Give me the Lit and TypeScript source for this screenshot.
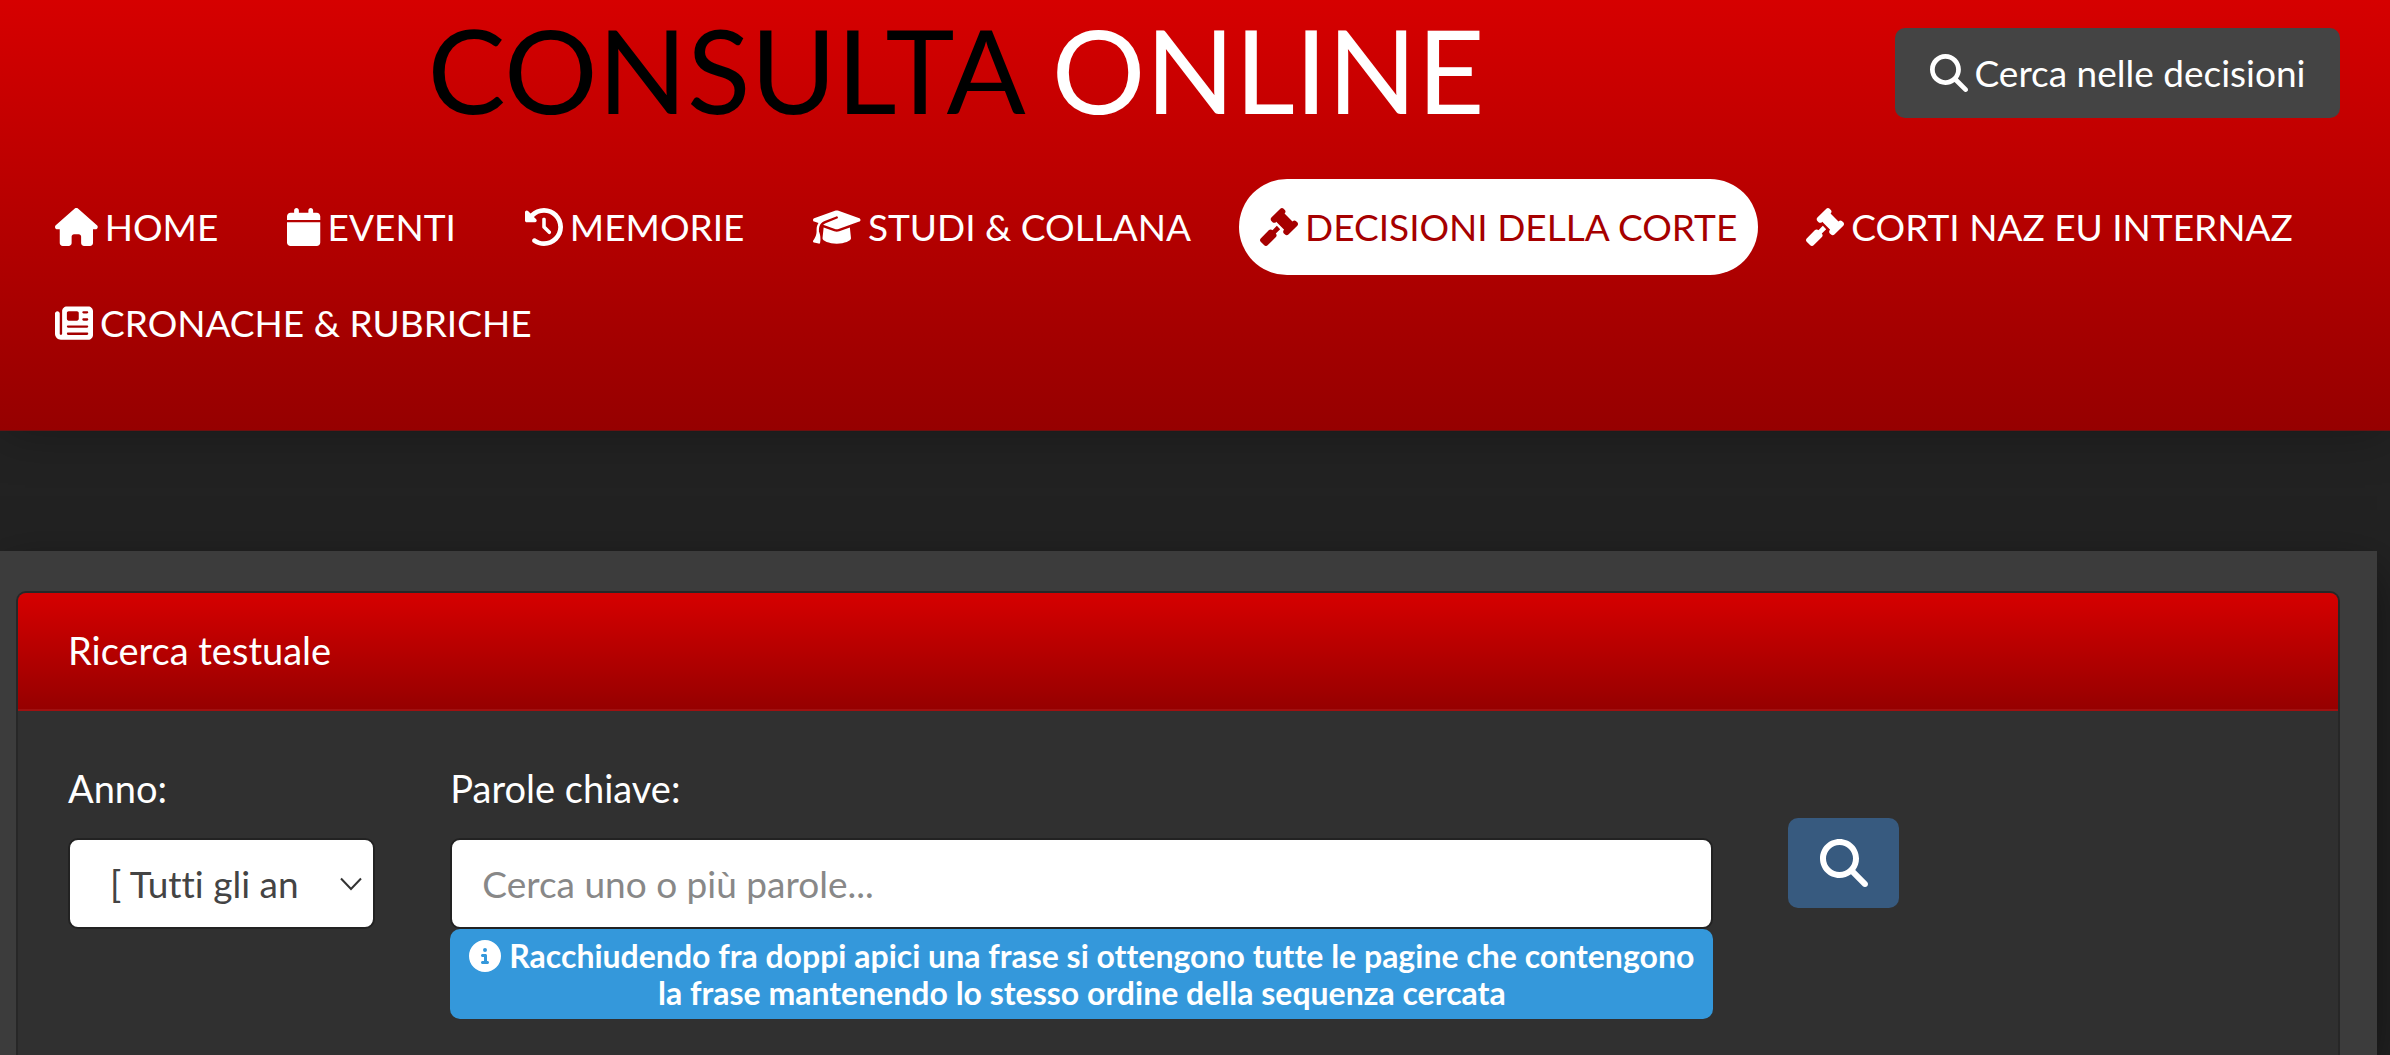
import { LitElement, html, css, svg } from "lit";
import { customElement, property } from "lit/decorators.js";
import { classMap } from "lit/directives/class-map.js";

/** Solid glyphs on a 512-unit tall grid: [grid width, outline]. */
const ICONS: Record<string, [number, string]> = {
  search: [512, "M416 208c0 45.9-14.9 88.3-40 122.7L502.6 457.4c12.5 12.5 12.5 32.8 0 45.3s-32.8 12.5-45.3 0L330.7 376c-34.4 25.2-76.8 40-122.7 40C93.1 416 0 322.9 0 208S93.1 0 208 0S416 93.1 416 208zM208 352a144 144 0 1 0 0-288 144 144 0 1 0 0 288z"],
  house: [576, "M575.8 255.5c0 18-15 32.1-32 32.1h-32l.7 160.2c0 2.7-.2 5.4-.5 8.1V472c0 22.1-17.9 40-40 40H456c-1.1 0-2.2 0-3.3-.1c-1.4 .1-2.8 .1-4.2 .1H416 392c-22.1 0-40-17.9-40-40V448 384c0-17.7-14.3-32-32-32H256c-17.7 0-32 14.3-32 32v64 24c0 22.1-17.9 40-40 40H160 128.1c-1.5 0-3-.1-4.5-.2c-1.2 .1-2.4 .2-3.6 .2H104c-22.1 0-40-17.9-40-40V360c0-.9 0-1.9 .1-2.8V287.6H32c-18 0-32-14-32-32.1c0-9 3-17 10-24L266.4 8c7-7 15-8 22-8s15 2 21 7L564.8 231.5c8 7 12 15 11 24z"],
  calendar: [448, "M96 32V64H48C21.5 64 0 85.5 0 112v48H448V112c0-26.5-21.5-48-48-48H352V32c0-17.7-14.3-32-32-32s-32 14.3-32 32V64H160V32c0-17.7-14.3-32-32-32S96 14.3 96 32zM448 192H0V464c0 26.5 21.5 48 48 48H400c26.5 0 48-21.5 48-48V192z"],
  history: [512, "M75 75L41 41C25.9 25.9 0 36.6 0 57.9V168c0 13.3 10.7 24 24 24H134.1c21.4 0 32.1-25.9 17-41l-30.8-30.8C155 85.5 203 64 256 64c106 0 192 86 192 192s-86 192-192 192c-40.8 0-78.6-12.7-109.7-34.4c-14.5-10.1-34.4-6.6-44.6 7.9s-6.6 34.4 7.9 44.6C151.2 495 201.7 512 256 512c141.4 0 256-114.6 256-256S397.4 0 256 0C185.3 0 121.3 28.7 75 75zm181 53c-13.3 0-24 10.7-24 24V256c0 6.4 2.5 12.5 7 17l72 72c9.4 9.4 24.6 9.4 33.9 0s9.4-24.6 0-33.9l-65-65V152c0-13.3-10.7-24-24-24z"],
  cap: [640, "M320 32c-8.1 0-16.1 1.4-23.7 4.1L15.8 137.4C6.3 140.9 0 149.9 0 160s6.3 19.1 15.8 22.6l57.9 20.9C57.3 229.3 48 259.8 48 291.9v28.1c0 28.4-10.8 57.7-22.3 80.8c-6.5 13-13.9 25.8-22.5 37.6C0 442.7-.9 448.3 .9 453.4s6 8.9 11.2 10.2l64 16c4.2 1.1 8.7 .3 12.4-2s6.3-6.1 7.1-10.4c8.6-42.8 4.3-81.2-2.1-108.7C90.3 344.3 86 329.8 80 316.5V291.9c0-30.2 10.2-58.7 27.9-81.5c12.9-15.5 29.6-28 49.2-35.7l157-61.7c8.2-3.2 17.5 .8 20.7 9s-.8 17.5-9 20.7l-157 61.7c-12.4 4.9-23.3 12.4-32.2 21.6l159.6 57.6c7.6 2.7 15.6 4.1 23.7 4.1s16.1-1.4 23.7-4.1L624.2 182.6c9.5-3.4 15.8-12.5 15.8-22.6s-6.3-19.1-15.8-22.6L343.7 36.1C336.1 33.4 328.1 32 320 32zM128 408c0 35.3 86 72 192 72s192-36.7 192-72L496.7 262.6 354.5 314c-11.1 4-22.8 6-34.5 6s-23.5-2-34.5-6L143.3 262.6 128 408z"],
  gavel: [512, "M318.6 9.4c-12.5-12.5-32.8-12.5-45.3 0l-120 120c-12.5 12.5-12.5 32.8 0 45.3l16 16c12.5 12.5 32.8 12.5 45.3 0l4-4L325.4 293.4l-4 4c-12.5 12.5-12.5 32.8 0 45.3l16 16c12.5 12.5 32.8 12.5 45.3 0l120-120c12.5-12.5 12.5-32.8 0-45.3l-16-16c-12.5-12.5-32.8-12.5-45.3 0l-4 4L330.6 74.6l4-4c12.5-12.5 12.5-32.8 0-45.3l-16-16zm-152 288c-12.5-12.5-32.8-12.5-45.3 0l-112 112c-12.5 12.5-12.5 32.8 0 45.3l48 48c12.5 12.5 32.8 12.5 45.3 0l112-112c12.5-12.5 12.5-32.8 0-45.3l-1.4-1.4L272 285.3 226.7 240 168 298.7l-1.4-1.4z"],
  news: [512, "M96 96c0-35.3 28.7-64 64-64H448c35.3 0 64 28.7 64 64V416c0 35.3-28.7 64-64 64H80c-44.2 0-80-35.8-80-80V128c0-17.7 14.3-32 32-32s32 14.3 32 32V400c0 8.8 7.2 16 16 16s16-7.2 16-16V96zm64 24v80c0 13.3 10.7 24 24 24H296c13.3 0 24-10.7 24-24V120c0-13.3-10.7-24-24-24H184c-13.3 0-24 10.7-24 24zm208-8c0 8.8 7.2 16 16 16h48c8.8 0 16-7.2 16-16s-7.2-16-16-16H384c-8.8 0-16 7.2-16 16zm0 96c0 8.8 7.2 16 16 16h48c8.8 0 16-7.2 16-16s-7.2-16-16-16H384c-8.8 0-16 7.2-16 16zM160 304c0 8.8 7.2 16 16 16H432c8.8 0 16-7.2 16-16s-7.2-16-16-16H176c-8.8 0-16 7.2-16 16zm0 96c0 8.8 7.2 16 16 16H432c8.8 0 16-7.2 16-16s-7.2-16-16-16H176c-8.8 0-16 7.2-16 16z"],
  info: [512, "M256 512A256 256 0 1 0 256 0a256 256 0 1 0 0 512zM216 336h24V272H216c-13.3 0-24-10.7-24-24s10.7-24 24-24h48c13.3 0 24 10.7 24 24v88h8c13.3 0 24 10.7 24 24s-10.7 24-24 24H216c-13.3 0-24-10.7-24-24s10.7-24 24-24zm40-208a32 32 0 1 1 0 64 32 32 0 1 1 0-64z"],
};

@customElement("ui-icon")
export class UiIcon extends LitElement {
  static styles = css`
    :host {
      display: inline-flex;
      height: 1em;
    }
    .glyph {
      display: block;
      height: 100%;
      width: auto;
      fill: currentColor;
    }
  `;

  @property() name = "search";

  render() {
    const [width, outline] = ICONS[this.name];
    return html`<svg class="glyph" viewBox="0 0 ${width} 512" aria-hidden="true">${svg`<path d=${outline}></path>`}</svg>`;
  }
}

interface NavItem {
  icon: string;
  label: string;
  active?: boolean;
}

const NAV: NavItem[] = [
  { icon: "house", label: "HOME" },
  { icon: "calendar", label: "EVENTI" },
  { icon: "history", label: "MEMORIE" },
  { icon: "cap", label: "STUDI & COLLANA" },
  { icon: "gavel", label: "DECISIONI DELLA CORTE", active: true },
  { icon: "gavel", label: "CORTI NAZ EU INTERNAZ" },
  { icon: "news", label: "CRONACHE & RUBRICHE" },
];

@customElement("site-header")
export class SiteHeader extends LitElement {
  static styles = css`
    :host {
      display: block;
      font-size: 37px;
    }
    .header {
      background: linear-gradient(#d60000, #960000);
      border-bottom: 1px solid #6b1010;
      box-shadow: 0 0 50px rgba(0, 0, 0, 0.3);
      padding-bottom: 59px;
    }
    .brand-row {
      display: grid;
      grid-template-columns: minmax(0, 4fr) minmax(0, 1fr);
      align-items: start;
    }
    .brand {
      justify-self: center;
      font-size: 117px;
      line-height: 138px;
      color: #fff;
      text-decoration: none;
      white-space: nowrap;
    }
    .brand-dark {
      color: #000;
    }
    .icon {
      font-size: 38px;
    }
    .cta {
      justify-self: end;
      display: flex;
      align-items: center;
      justify-content: center;
      gap: 7px;
      min-width: 445px;
      height: 90px;
      margin: 28px 50px 0 0;
      padding: 0 32px;
      border: 0;
      border-radius: 10px;
      background: #444;
      color: #fff;
      font: inherit;
      white-space: nowrap;
    }
    .nav {
      display: flex;
      flex-wrap: wrap;
      column-gap: 27px;
      margin: 41px 0 0;
      padding: 0 34px;
      list-style: none;
    }
    .link {
      display: flex;
      align-items: center;
      gap: 7px;
      height: 96px;
      padding: 0 21px;
      border-radius: 50px;
      color: #fff;
      text-decoration: none;
      white-space: nowrap;
    }
    .link.active {
      background: #fff;
      color: #a60000;
    }
  `;

  render() {
    return html`
      <header class="header">
        <div class="brand-row">
          <a class="brand" href="#"><span class="brand-dark">CONSULTA</span> ONLINE</a>
          <button class="cta" type="button"><ui-icon class="icon" name="search"></ui-icon>Cerca nelle decisioni</button>
        </div>
        <nav>
          <ul class="nav">
            ${NAV.map(
              (item) => html`<li>
                <a class=${classMap({ link: true, active: !!item.active })} href="#"
                  ><ui-icon class="icon" name=${item.icon}></ui-icon><span>${item.label}</span></a
                >
              </li>`
            )}
          </ul>
        </nav>
      </header>
    `;
  }
}

@customElement("search-panel")
export class SearchPanel extends LitElement {
  static styles = css`
    :host {
      display: flex;
      flex-direction: column;
    }
    .panel {
      flex: 1;
      border: 2px solid #272727;
      border-bottom: 0;
      border-radius: 10px 10px 0 0;
      background: #303030;
      overflow: hidden;
    }
    .title {
      margin: 0;
      padding: 29px 50px 31px;
      border-bottom: 2px solid #a01010;
      background: linear-gradient(#d60000, #960000);
      font-size: 38px;
      font-weight: 400;
      line-height: 56px;
    }
    .form {
      display: grid;
      grid-template-columns: repeat(12, minmax(0, 1fr));
      column-gap: 75px;
      align-items: start;
      padding: 49px 51px 35px 50px;
    }
    .year {
      grid-column: span 2;
    }
    .words {
      grid-column: span 7;
    }
    .label {
      display: block;
      margin-bottom: 22px;
      line-height: 56px;
    }
    .picker {
      display: grid;
      align-items: center;
    }
    .picker > * {
      grid-area: 1 / 1;
    }
    .control {
      box-sizing: border-box;
      width: 100%;
      height: 91px;
      margin: 0;
      border: 2px solid #222;
      border-radius: 10px;
      background: #fff;
      color: #444;
      font: inherit;
      font-size: 37px;
    }
    .select {
      appearance: none;
      padding: 0 74px 0 40px;
    }
    .input {
      display: block;
      padding: 0 30px;
    }
    .input::placeholder {
      color: #888;
      opacity: 1;
    }
    .chevron {
      justify-self: end;
      width: 24px;
      height: 14px;
      margin-right: 12px;
      fill: none;
      stroke: #333;
      stroke-width: 2;
      pointer-events: none;
    }
    .hint {
      margin: 0;
      padding: 8px 14px;
      border-radius: 10px;
      background: #3498db;
      font-size: 32px;
      font-weight: 700;
      line-height: 37px;
      text-align: center;
    }
    .hint-icon {
      vertical-align: -4px;
    }
    .submit {
      grid-column: span 3;
      justify-self: start;
      display: grid;
      place-items: center;
      width: 111px;
      height: 90px;
      margin-top: 58px;
      border: 0;
      border-radius: 10px;
      background: #375a7f;
      color: #fff;
      font-size: 48px;
    }
  `;

  render() {
    return html`
      <section class="panel">
        <h2 class="title">Ricerca testuale</h2>
        <form class="form">
          <div class="year">
            <label class="label" for="year">Anno:</label>
            <div class="picker">
              <select class="control select" id="year">
                <option>[ Tutti gli anni ]</option>
              </select>
              <svg class="chevron" viewBox="0 0 24 14" aria-hidden="true"><path d="M2 1.5 12 12 22 1.5"></path></svg>
            </div>
          </div>
          <div class="words">
            <label class="label" for="words">Parole chiave:</label>
            <input class="control input" id="words" type="text" placeholder="Cerca uno o più parole..." />
            <p class="hint">
              <ui-icon class="hint-icon" name="info"></ui-icon> Racchiudendo fra doppi apici una frase si ottengono tutte le pagine che contengono la frase mantenendo lo stesso ordine della sequenza cercata
            </p>
          </div>
          <button class="submit" type="button" aria-label="Cerca"><ui-icon name="search"></ui-icon></button>
        </form>
      </section>
    `;
  }
}

@customElement("app-root")
export class AppRoot extends LitElement {
  static styles = css`
    :host {
      display: flex;
      flex-direction: column;
      min-height: 100vh;
      overflow: hidden;
      background: #222;
      color: #fff;
      font-family: Lato, "Liberation Sans", sans-serif;
      font-size: 38px;
      line-height: 56px;
      font-variant-ligatures: none;
    }
    .content {
      flex: 1;
      display: flex;
      margin: 120px 13px 0 0;
      padding: 40px 37px 0 16px;
      background: #3c3c3c;
      box-shadow: 0 20px 50px rgba(0, 0, 0, 0.5);
    }
    .search {
      flex: 1;
    }
  `;

  render() {
    return html`
      <site-header></site-header>
      <main class="content"><search-panel class="search"></search-panel></main>
    `;
  }
}
